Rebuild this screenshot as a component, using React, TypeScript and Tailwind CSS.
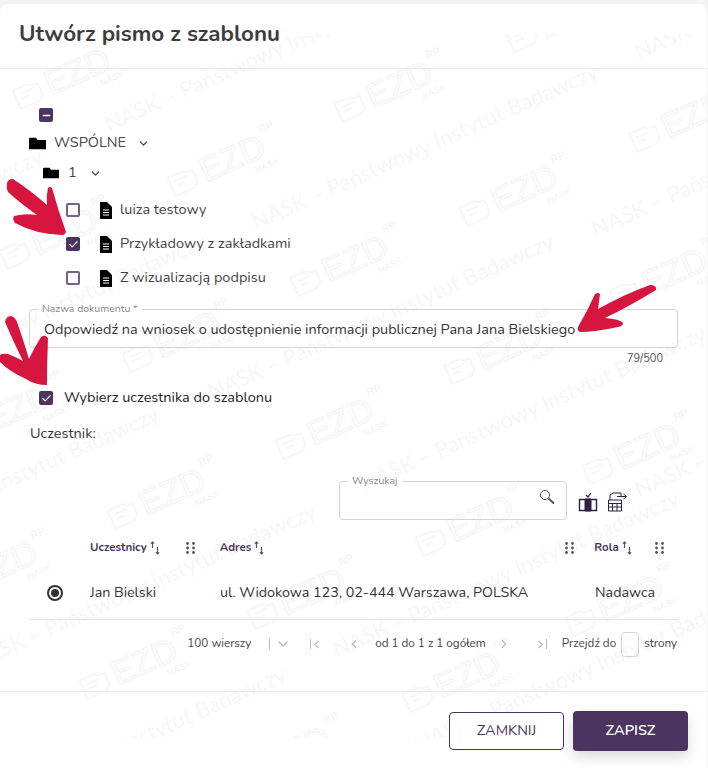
import { ChevronDown, ChevronLeft, ChevronRight, Check, Minus } from "lucide-react";

const font = "font-['Nunito','Lato','Noto_Sans',sans-serif]";

const logos = [
  [30, 90], [198, 17], [17, 250], [185, 177], [352, 103], [524, 33], [140, 353], [308, 277], [477, 207],
  [647, 133], [-28, 426], [125, 510], [293, 440], [462, 365], [627, 290], [-43, 583], [97, 680], [265, 610], [433, 537],
  [600, 465], [420, 693], [583, 617], [250, 768], [590, 770],
];

const slogans = [
  [110, 135], [257, 233], [640, 63], [-298, 318], [-135, 403], [213, 403], [597, 240], [-182, 576], [365, 495], [-25, 673],
  [338, 660], [-55, 836], [420, 755], [640, 500],
];

function Watermark() {
  return (
    <div className="pointer-events-none absolute inset-x-0 top-[30px] bottom-[30px] overflow-hidden">
      {logos.map(([x, y]) => (
        <div
          key={`${x}-${y}`}
          className="absolute flex h-8 w-36 origin-left -rotate-[24deg] items-center gap-[5px] text-[#f6f6f6]"
          style={{ left: x - 16, top: y - 41 }}
        >
          <svg width="30" height="26" viewBox="0 0 30 26" fill="none" stroke="currentColor" strokeWidth="2">
            <path d="M2 5h16l4 3h6v12l-5 5H2z M7 11h14 M7 16h9" />
          </svg>
          <span className="relative font-['Liberation_Sans'] text-[34px] leading-none text-transparent [-webkit-text-stroke:1.5px_#f6f6f6]">
            EZD
            <span className="absolute -top-[3px] -right-[17px] text-[11px] font-bold [-webkit-text-stroke:0] text-[#f6f6f6]">RP</span>
            <span className="absolute -bottom-[9px] right-[-8px] text-[9px] font-bold [-webkit-text-stroke:0] text-[#f6f6f6]">NASK</span>
          </span>
        </div>
      ))}
      {slogans.map(([x, y]) => (
        <span
          key={`${x}-${y}`}
          className="absolute origin-bottom-left -rotate-[24deg] font-['Lato'] text-[22px] leading-none whitespace-nowrap text-[#f7f7f7]"
          style={{ left: x, top: y - 56 }}
        >
          NASK – Państwowy Instytut Badawczy
        </span>
      ))}
    </div>
  );
}

function PurpleCheck({ checked }: { checked?: boolean }) {
  return (
    <span
      className={`flex h-[14px] w-[14px] items-center justify-center rounded-[2px] border-2 border-[#72608a] ${
        checked ? "border-none bg-[#4b3560]" : ""
      }`}
    >
      {checked ? <Check size={11} strokeWidth={2.5} className="text-white" /> : null}
    </span>
  );
}

function FolderIcon({ size }: { size: number }) {
  return (
    <svg width={size} height={size} viewBox="0 0 24 24" fill="#000">
      <path d="M10 4H2Q0 4 0 6v14h24V7H12z" />
    </svg>
  );
}

function DocIcon() {
  return (
    <svg width="12" height="17" viewBox="0 0 12 17" className="shrink-0">
      <path d="M0 0h7l5 5v12H0z" fill="#000" />
      <path d="M3 8h6M3 10.5h6M3 13h6" stroke="#fff" strokeWidth="1" />
    </svg>
  );
}

function SortIcon() {
  return (
    <svg width="12" height="14" viewBox="0 0 12 14" fill="none" stroke="#555" strokeWidth="1.2">
      <path d="M3.5 7V1M1.8 2.6 3.5 1l1.7 1.6M8.5 6v7M6.8 11.4 8.5 13l1.7-1.6" />
    </svg>
  );
}

function GripIcon() {
  return (
    <svg width="9" height="12" viewBox="0 0 9 12" fill="#555">
      {[1.5, 6, 10.5].map((y) => (
        <g key={y}>
          <circle cx="1.5" cy={y} r="1.4" />
          <circle cx="7.5" cy={y} r="1.4" />
        </g>
      ))}
    </svg>
  );
}

function Tpl({ label, checked }: { label: string; checked?: boolean }) {
  return (
    <div className="flex h-[34px] items-center pl-[66px] text-[14.5px] text-[#444]">
      <PurpleCheck checked={checked} />
      <span className="ml-[20px] mr-[8px]">
        <DocIcon />
      </span>
      {label}
    </div>
  );
}

export default function App() {
  return (
    <div className={`${font} h-[768px] w-[708px] overflow-hidden bg-[#f3f3f3] pt-1`}>
      <div className="relative h-[764px] w-[707px] rounded-t-lg bg-white">
        <Watermark />
        <div className="relative flex h-full flex-col">
          <header className="flex h-[65px] items-center border-b border-[#e7e7ec] pb-1 pl-[19px] text-[22.4px] font-bold text-[#3d3d3d]">
            Utwórz pismo z szablonu
          </header>

          <div className="pl-[39px] pt-[39px]">
            <span className="flex h-[14px] w-[14px] items-center justify-center rounded-[2px] bg-[#4b3560]">
              <Minus size={11} strokeWidth={3.5} className="text-white" />
            </span>
          </div>
          <div className="mt-[11px] flex h-[20px] items-center pl-[29px] text-[14.5px] text-[#444]">
            <FolderIcon size={17} />
            <span className="ml-[8px]">WSPÓLNE</span>
            <ChevronDown size={13} strokeWidth={2.5} className="ml-[11px]" />
          </div>
          <div className="mt-[10px] flex h-[20px] items-center pl-[43px] text-[14.5px] text-[#444]">
            <FolderIcon size={16} />
            <span className="ml-[9px]">1</span>
            <ChevronDown size={13} strokeWidth={2.5} className="ml-[12px]" />
          </div>
          <div className="mt-[10px]">
            <Tpl label="luiza testowy" />
            <Tpl label="Przykładowy z zakładkami" checked />
            <Tpl label="Z wizualizacją podpisu" />
          </div>

          <fieldset className="mx-[29px] mt-[9px] h-[44px] rounded-[4px] border border-[#d4d4d4] pl-[8px]">
            <legend className="px-1 text-[10.5px] leading-[10px] text-[#8a8a8a]">Nazwa dokumentu *</legend>
            <div className="mt-[3px] pl-[6px] text-[14.45px] leading-[24px] whitespace-nowrap text-[#333]">
              Odpowiedź na wniosek o udostępnienie informacji publicznej Pana Jana Bielskiego
            </div>
          </fieldset>
          <div className="mr-[44px] mt-[4px] text-right text-[11px] leading-[14px] text-[#555]">79/500</div>

          <div className="mt-[22px] flex h-[20px] items-center pl-[39px] text-[14.5px] text-[#222]">
            <PurpleCheck checked />
            <span className="ml-[11px]">Wybierz uczestnika do szablonu</span>
          </div>
          <div className="mt-[15px] pl-[30px] text-[14.5px] leading-[20px] text-[#333]">Uczestnik:</div>

          <div className="mt-[38px] flex h-[44px] items-start pl-[339px]">
            <fieldset className="h-[44px] w-[228px] -translate-y-[5px] rounded-[4px] border border-[#d4d4d4] pl-[8px]">
              <legend className="px-1 text-[10.5px] leading-[10px] text-[#8a8a8a]">Wyszukaj</legend>
              <div className="flex justify-end pr-[11px] pt-[3px]">
                <svg width="16" height="16" viewBox="0 0 16 16" fill="none" stroke="#555">
                  <circle cx="6" cy="6" r="4.6" />
                  <path d="m9.5 9.5 5.5 5" strokeWidth="2" />
                </svg>
              </div>
            </fieldset>
            <svg width="20" height="20" viewBox="0 0 20 20" className="ml-[11px] mt-[11px]" fill="none" stroke="#2f1f47">
              <path d="M1.5 7.5h17v11h-17z" strokeWidth="1.4" />
              <path d="M7 7h6v12H7z" fill="#2f1f47" />
              <path d="m8 3 2 2 3-4" strokeWidth="1.2" />
            </svg>
            <svg width="22" height="20" viewBox="0 0 22 20" className="ml-[9px] mt-[11px]" fill="none" stroke="#2f1f47">
              <path d="M3 8V3l3-2h8v3M1.5 8h13v11h-13zM1.5 11.5h13M1.5 15h13M5.5 11.5V19M10 11.5V19" />
              <path d="M10 4.5h9M16.5 2l3 2.5-3 2.5" />
            </svg>
          </div>

          <div className="mt-[12px] flex h-[22px] items-center text-[11.5px] font-bold text-[#4b3560]">
            <span className="ml-[90px] mr-[2px]">Uczestnicy</span>
            <SortIcon />
            <span className="ml-[25px]">
              <GripIcon />
            </span>
            <span className="ml-[25px] mr-[2px]">Adres</span>
            <SortIcon />
            <span className="ml-[300px]">
              <GripIcon />
            </span>
            <span className="ml-[20px] mr-[2px]">Rola</span>
            <SortIcon />
            <span className="ml-[22px]">
              <GripIcon />
            </span>
          </div>

          <div className="mx-[29px] mt-[7px] flex h-[54px] items-center border-b border-[#e4e4e4] text-[14.3px] text-[#333]">
            <span className="ml-[18px] flex h-[16px] w-[16px] items-center justify-center rounded-full border-2 border-[#333]">
              <span className="h-2 w-2 rounded-full bg-[#333]" />
            </span>
            <span className="ml-[27px] w-[130px]">Jan Bielski</span>
            <span className="w-[375px]">ul. Widokowa 123, 02-444 Warszawa, POLSKA</span>
            <span>Nadawca</span>
          </div>

          <div className="ml-[31px] mr-[30px] mt-[6px] flex h-[36px] items-center justify-end text-[11.7px] text-[#444]">
            <span>100 wierszy</span>
            <span className="ml-[18px] h-[12px] border-l border-[#bbb]" />
            <ChevronDown size={16} className="ml-[5px] text-[#bbb]" />
            <span className="ml-[19px] flex items-center text-[#bbb]">
              <span className="h-[10px] border-l border-[#bbb]" />
              <ChevronLeft size={13} className="-ml-[1px]" />
            </span>
            <ChevronLeft size={14} className="ml-[24px] text-[#bbb]" />
            <span className="ml-[14px]">od 1 do 1 z 1 ogółem</span>
            <ChevronRight size={14} className="ml-[11px] text-[#bbb]" />
            <span className="ml-[23px] flex items-center text-[#bbb]">
              <ChevronRight size={13} className="-mr-[1px]" />
              <span className="h-[10px] border-l border-[#bbb]" />
            </span>
            <span className="ml-[15px]">Przejdź do</span>
            <span className="mx-[5px] h-[25px] w-[18px] rounded-[4px] border border-[#d4d4d4]" />
            <span>strony</span>
          </div>

          <div className="mt-[29px] border-t border-[#e7e7ec]" />
          <div className="mt-[19px] flex justify-end gap-[9px] pr-[19px]">
            <button className="mt-[1px] h-[38px] w-[115px] rounded-[4px] border border-[#4b3560] bg-white text-[14.5px] text-[#4b3560]">
              ZAMKNIJ
            </button>
            <button className="h-[40px] w-[115px] rounded-[4px] bg-[#4b3560] text-[14.5px] font-semibold text-white shadow-[0_6px_14px_rgba(0,0,0,0.15)]">
              ZAPISZ
            </button>
          </div>
        </div>

        <svg width="708" height="764" viewBox="0 4 708 764" className="pointer-events-none absolute inset-0" fill="#d6163f">
          <path d="M7 183Q8 179 13 179Q30 190 47 205Q46 196 48 188Q50 186 52 188Q58 210 66 232Q65 235 62 235Q35 234 15 223Q12 219 14 216Q25 213 37 215Q20 203 8 192Q6 188 7 183z" />
          <path d="M5 322Q6 316 11 316Q15 317 17 322Q24 342 29 359Q34 348 41 337Q45 334 48 338Q47 362 47 385Q35 385 26 379Q10 372 0 362L0 355Q2 353 8 354Q16 357 23 361Q13 341 5 322z" />
          <path d="M650 285Q657 285 656 290Q630 306 605 318Q620 319 623 323Q623 326 618 327Q595 332 580 332Q577 331 578 327Q588 310 595 294Q598 292 600 294Q599 302 598 309Q625 294 650 285z" />
        </svg>
      </div>
    </div>
  );
}
